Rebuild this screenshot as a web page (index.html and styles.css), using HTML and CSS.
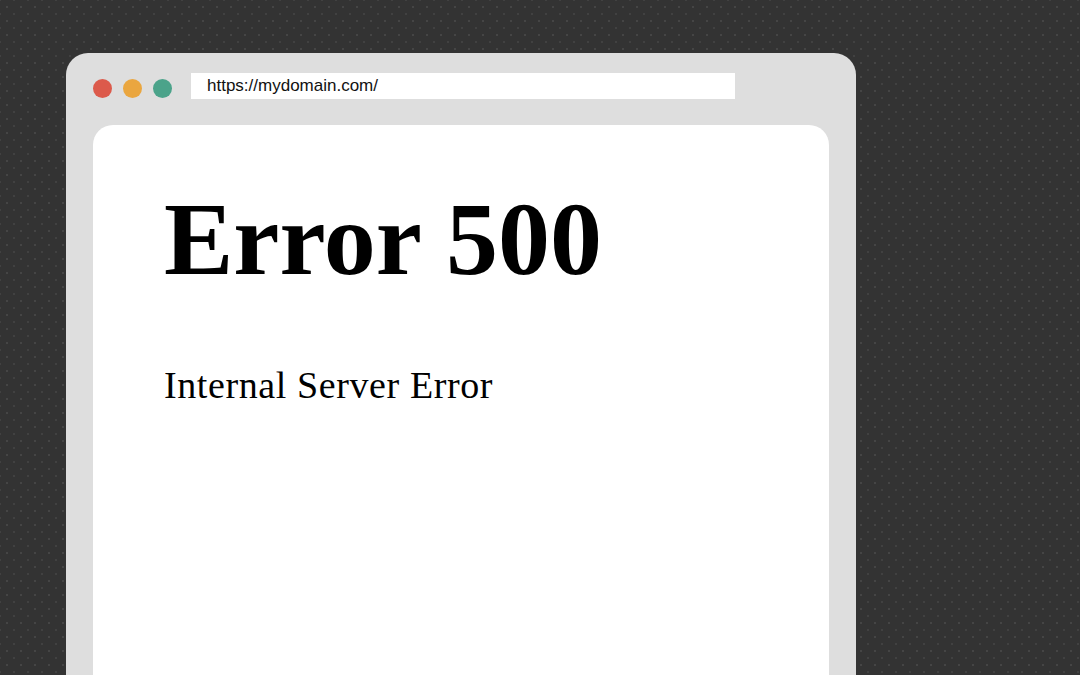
FILE: index.html
```html
<!DOCTYPE html>
<html lang="en">
<head>
    <meta charset="UTF-8">
    <meta name="viewport" content="width=device-width, initial-scale=1.0">
    <title>Error 500</title>
    <link rel="stylesheet" href="styles.css">
</head>
<body>
    <div class="window">
        <div class="toolbar">
            <div class="lights">
                <span class="light red"></span>
                <span class="light orange"></span>
                <span class="light green"></span>
            </div>
            <div class="address">https://mydomain.com/</div>
        </div>
        <div class="page">
            <h1 class="title">Error 500</h1>
            <p class="message">Internal Server Error</p>
        </div>
    </div>
</body>
</html>
```

FILE: styles.css
```css
html, body {
    height: 100%;
}

body {
    margin: 0;
    overflow: hidden;
    background-color: #333;
    background-image:
        radial-gradient(rgba(255, 255, 255, 0.09) 0.8px, transparent 1.2px),
        radial-gradient(rgba(255, 255, 255, 0.07) 0.8px, transparent 1.2px);
    background-size: 14px 14px, 14px 14px;
    background-position: 0 0, 7px 7px;
    font-family: "Liberation Sans", Arial, sans-serif;
}

.window {
    margin: 53px 0 0 66px;
    width: 790px;
    height: 622px;
    background-color: #dedede;
    border-radius: 22px 22px 0 0;
    display: flex;
    flex-direction: column;
}

.toolbar {
    height: 72px;
    display: flex;
    align-items: flex-start;
    padding: 20px 27px 0;
    box-sizing: border-box;
}

.lights {
    display: flex;
    gap: 11px;
    margin: 6px 19px 0 0;
}

.light {
    width: 19px;
    height: 19px;
    border-radius: 50%;
}

.red {
    background-color: #dc5a4b;
}

.orange {
    background-color: #eaa63f;
}

.green {
    background-color: #4ba38a;
}

.address {
    width: 544px;
    height: 26px;
    line-height: 26px;
    background-color: #fff;
    padding-left: 16px;
    box-sizing: border-box;
    font-size: 17px;
    color: #111;
}

.page {
    flex: 1;
    margin: 0 27px;
    background-color: #fff;
    border-radius: 20px 20px 0 0;
    padding: 62px 0 0 71px;
    font-family: "Liberation Serif", "Times New Roman", serif;
    color: #000;
}

.title {
    margin: 0;
    font-size: 104px;
    line-height: 1;
    font-weight: bold;
}

.message {
    margin: 75px 0 0;
    font-size: 38px;
    line-height: 1;
    letter-spacing: 0.6px;
}
```
